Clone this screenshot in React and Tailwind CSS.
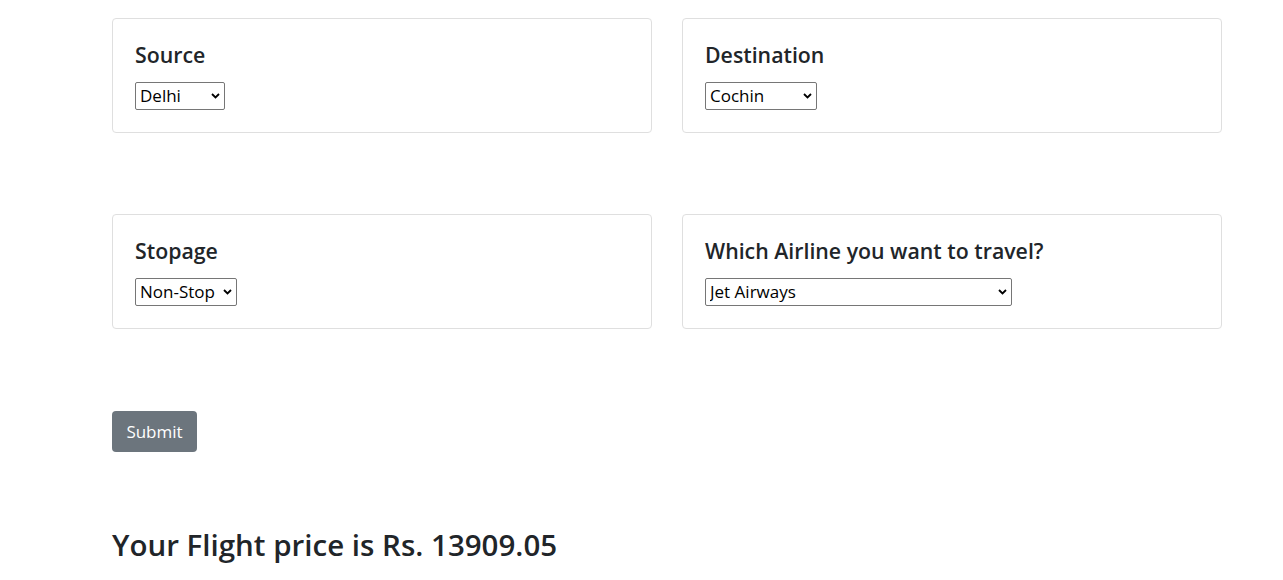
import React from "react";

const font = { fontFamily: '"Open Sans", "Noto Sans", sans-serif' };

function Chevron() {
  return (
    <svg
      className="pointer-events-none absolute right-[5px] top-[11px]"
      width="9"
      height="6"
      viewBox="0 0 9 6"
      fill="none"
    >
      <path d="M1 1 L4.5 4.5 L8 1" stroke="#000" strokeWidth="1.8" />
    </svg>
  );
}

function Select({ widthClass, value, options }) {
  return (
    <div className={`relative ${widthClass} h-[28px]`}>
      <select
        defaultValue={value}
        className="h-[28px] w-full appearance-none border border-[#767676] bg-white pl-[4px] pr-[20px] text-[17px] leading-[26px] text-black rounded-[2px]"
        style={font}
      >
        {options.map((o) => (
          <option key={o}>{o}</option>
        ))}
      </select>
      <Chevron />
    </div>
  );
}

function Card({ title, children }) {
  return (
    <div className="rounded-[4px] border border-[#dfdfdf] bg-white py-[20px] px-[22px] h-[115px]">
      <div className="h-[32px] text-[21.3px] leading-[32px] font-semibold text-[#212529] mb-[11px] whitespace-nowrap">
        {title}
      </div>
      {children}
    </div>
  );
}

export default function App() {
  return (
    <div className="min-h-[580px] bg-white pl-[112px] pt-[18px]" style={font}>
      <div className="w-[1110px]">
        <div className="grid grid-cols-2 gap-x-[30px]">
          <Card title="Source">
            <Select
              widthClass="w-[90px]"
              value="Delhi"
              options={["Delhi", "Banglore", "Kolkata", "Mumbai", "Chennai"]}
            />
          </Card>
          <Card title="Destination">
            <Select
              widthClass="w-[112px]"
              value="Cochin"
              options={["Cochin", "Banglore", "Delhi", "New Delhi", "Hyderabad", "Kolkata"]}
            />
          </Card>
        </div>
        <div className="mt-[81px] grid grid-cols-2 gap-x-[30px]">
          <Card title="Stopage">
            <Select
              widthClass="w-[102px]"
              value="Non-Stop"
              options={["Non-Stop", "1", "2", "3", "4"]}
            />
          </Card>
          <Card title="Which Airline you want to travel?">
            <Select
              widthClass="w-[307px]"
              value="Jet Airways"
              options={["Jet Airways", "IndiGo", "Air India", "Multiple carriers", "SpiceJet", "Vistara", "Air Asia", "GoAir"]}
            />
          </Card>
        </div>
        <div className="mt-[82px]">
          <button
            className="h-[41px] w-[85px] rounded-[4px] bg-[#6c757d] text-[17px] leading-[27px] text-white"
            style={font}
          >
            Submit
          </button>
        </div>
        <h2 className="mt-[73px] text-[29.5px] leading-[40px] font-semibold text-[#212529] whitespace-nowrap">
          Your Flight price is Rs. 13909.05
        </h2>
      </div>
    </div>
  );
}
